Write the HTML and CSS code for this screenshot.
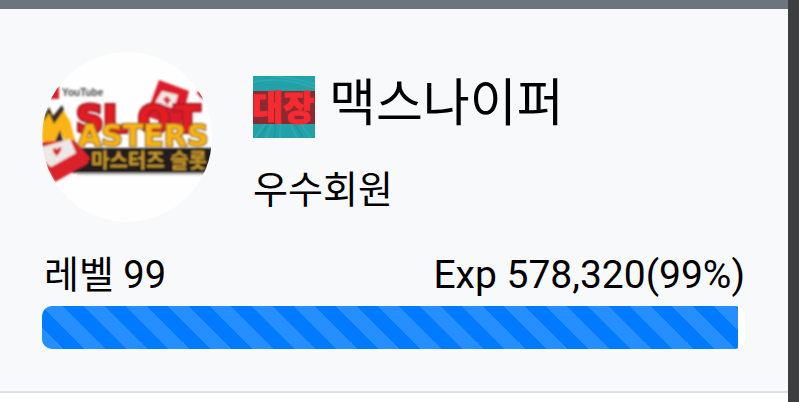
FILE: index.html
```html
<!DOCTYPE html>
<html lang="ko">
<head>
  <meta charset="UTF-8">
  <meta name="viewport" content="width=device-width, initial-scale=1.0">
  <title>맥스나이퍼</title>
  <link rel="stylesheet" href="styles.css">
</head>
<body>
  <div class="sidebar">
    <div class="topbar"></div>

    <div class="profile">
      <div class="member">
        <svg class="avatar" viewBox="0 0 170 170" role="img" aria-label="마스터즈 슬롯">
          <defs>
            <clipPath id="circle"><circle cx="85" cy="85" r="85"/></clipPath>
            <filter id="soft"><feGaussianBlur stdDeviation="0.8"/></filter>
          </defs>
          <g clip-path="url(#circle)">
            <rect width="170" height="170" fill="#fefefe"/>
            <g filter="url(#soft)">
              <!-- cards behind the title -->
              <path d="M0 47V34H17V47Z" fill="#d9202b"/>
              <path d="M117 28L147 39L138 76L104 64Z" fill="#dc1f2b"/>
              <path d="M120 39L136 43L132 56L113 51Z" fill="#f3e9e8"/>
              <path d="M121 47l4 -3l4 4l-4 5Z" fill="#d83a43"/>
              <path d="M154 40l10 -1l2 9l-7 -2Z" fill="#dc1f2b"/>
              <text class="logo-small" x="20" y="44">YouTube</text>
              <text class="logo-slot" x="34" y="80">S</text>
              <text class="logo-slot" x="61" y="80">L</text>
              <text class="logo-slot" x="96" y="80">O</text>
              <text class="logo-slot" x="132" y="80">T</text>
              <path d="M36 96H170V121H30Z" fill="#211f1e"/>
              <path d="M35 122H165" stroke="#c5c5c3" stroke-width="2"/>
              <path d="M0 67L7 55L13 67L19 55L28 69L34 92L24 91L18 79L11 92L0 89Z" fill="#fab413"/>
              <path d="M2 64L7 55L11 64L20 53L22 58L12 72L7 61L2 69Z" fill="#302c25"/>
              <path d="M18 78L22 91L13 89Z" fill="#302c25"/>
              <path d="M0 90L32 88L48 106L45 112L13 130L0 108Z" fill="#d9202b"/>
              <path d="M0 95L28 87L34 101L9 115L0 108Z" fill="#ece8e5"/>
              <path d="M15 104C7 98 13 93 15 98C18 92 23 96 15 104Z" fill="#d9202b"/>
              <text class="logo-masters" x="36" y="94">ASTERS</text>
              <text class="logo-korean" x="49" y="116">마스터즈 슬롯</text>
            </g>
          </g>
        </svg>

        <div class="member-info">
          <div class="name-row">
            <svg class="badge" viewBox="0 0 62 62" role="img" aria-label="대장">
              <defs>
                <filter id="badge-soft"><feGaussianBlur stdDeviation="0.7"/></filter>
              </defs>
              <rect width="62" height="62" fill="#22a2a8"/>
              <path d="M0 6Q30 0 62 12M18 0Q42 2 62 8M2 62L14 45M13 62L19 45M27 62L28 45M44 62L36 45M58 62L46 45" fill="none" stroke="#45bcc0" stroke-width="2" opacity="0.3"/>
              <path d="M6 62L17 45M21 62L23 45M50 62L40 45" fill="none" stroke="#168b91" stroke-width="2" opacity="0.4"/>
              <g filter="url(#badge-soft)">
                <rect x="-4" y="15" width="70" height="33" fill="#8a2a30"/>
                <text class="badge-text" x="-1" y="44">대장</text>
              </g>
            </svg>
            <h1 class="name">맥스나이퍼</h1>
          </div>
          <p class="grade">우수회원</p>
        </div>
      </div>

      <div class="level-row">
        <span class="level">레벨 99</span>
        <span class="exp">Exp 578,320(99%)</span>
      </div>
      <div class="progress" role="progressbar" aria-label="Exp" aria-valuenow="99" aria-valuemin="0" aria-valuemax="100">
        <div class="progress-bar" style="width: 99%"></div>
      </div>
    </div>
  </div>

  <div class="backdrop"></div>
</body>
</html>
```
FILE: styles.css
```css
* {
  margin: 0;
  padding: 0;
  box-sizing: border-box;
}

body {
  display: flex;
  min-height: 100vh;
  font-family: Roboto, 'Noto Sans CJK KR', sans-serif;
  font-size: 38px;
  color: #000;
  background-color: #fff;
}

.sidebar {
  flex: 1;
  min-width: 0;
}

.backdrop {
  width: 11px;
  background-color: #3d3e40;
}

.topbar {
  height: 9px;
  background-color: #6c757d;
}

/* Profile */
.profile {
  padding: 43px 43px 42px 42px;
  background-color: #f8f9fb;
  border-bottom: 2px solid #dee2e6;
}

.member {
  display: flex;
  gap: 41px;
}

.avatar {
  width: 170px;
  height: 170px;
  flex-shrink: 0;
}

.member-info {
  padding-top: 24px;
}

.name-row {
  display: flex;
  align-items: flex-start;
  gap: 14px;
  height: 66px;
}

.badge {
  width: 62px;
  height: 62px;
}

.name {
  font-size: 51px;
  font-weight: 400;
  line-height: 56px;
  white-space: nowrap;
}

.grade {
  margin-top: 20px;
  line-height: 56px;
}

.level-row {
  display: flex;
  justify-content: space-between;
  margin-top: 24px;
  line-height: 58px;
  height: 60px;
  white-space: nowrap;
}

.level {
  padding-left: 2px;
}

.exp {
  font-size: 39px;
}

/* Experience bar */
.progress {
  height: 43px;
  border-radius: 10px;
  background-color: #fff;
  overflow: hidden;
}

.progress-bar {
  height: 100%;
  background-color: #007bff;
  background-image: linear-gradient(45deg, rgba(255, 255, 255, 0.15) 25%, transparent 25%, transparent 50%, rgba(255, 255, 255, 0.15) 50%, rgba(255, 255, 255, 0.15) 75%, transparent 75%, transparent);
  background-size: 42px 42px;
}

/* Lettering inside the pictures */
.logo-small {
  font: 700 10px 'Liberation Sans', sans-serif;
  fill: #444;
}

.logo-slot {
  font: 700 38px 'DejaVu Sans', sans-serif;
  fill: #e51c24;
  stroke: #a81e26;
  stroke-width: 4px;
  paint-order: stroke;
}

.logo-masters {
  font: 700 30px 'DejaVu Sans', sans-serif;
  fill: #fab413;
  stroke: #6b4a20;
  stroke-width: 2px;
  paint-order: stroke;
}

.logo-korean {
  font: 700 20px 'Noto Sans CJK KR', sans-serif;
  fill: #c99a2b;
}

.badge-text {
  font: 900 34px 'Noto Sans CJK KR', sans-serif;
  fill: #f52b30;
  stroke: #f52b30;
  stroke-width: 1px;
}
```
